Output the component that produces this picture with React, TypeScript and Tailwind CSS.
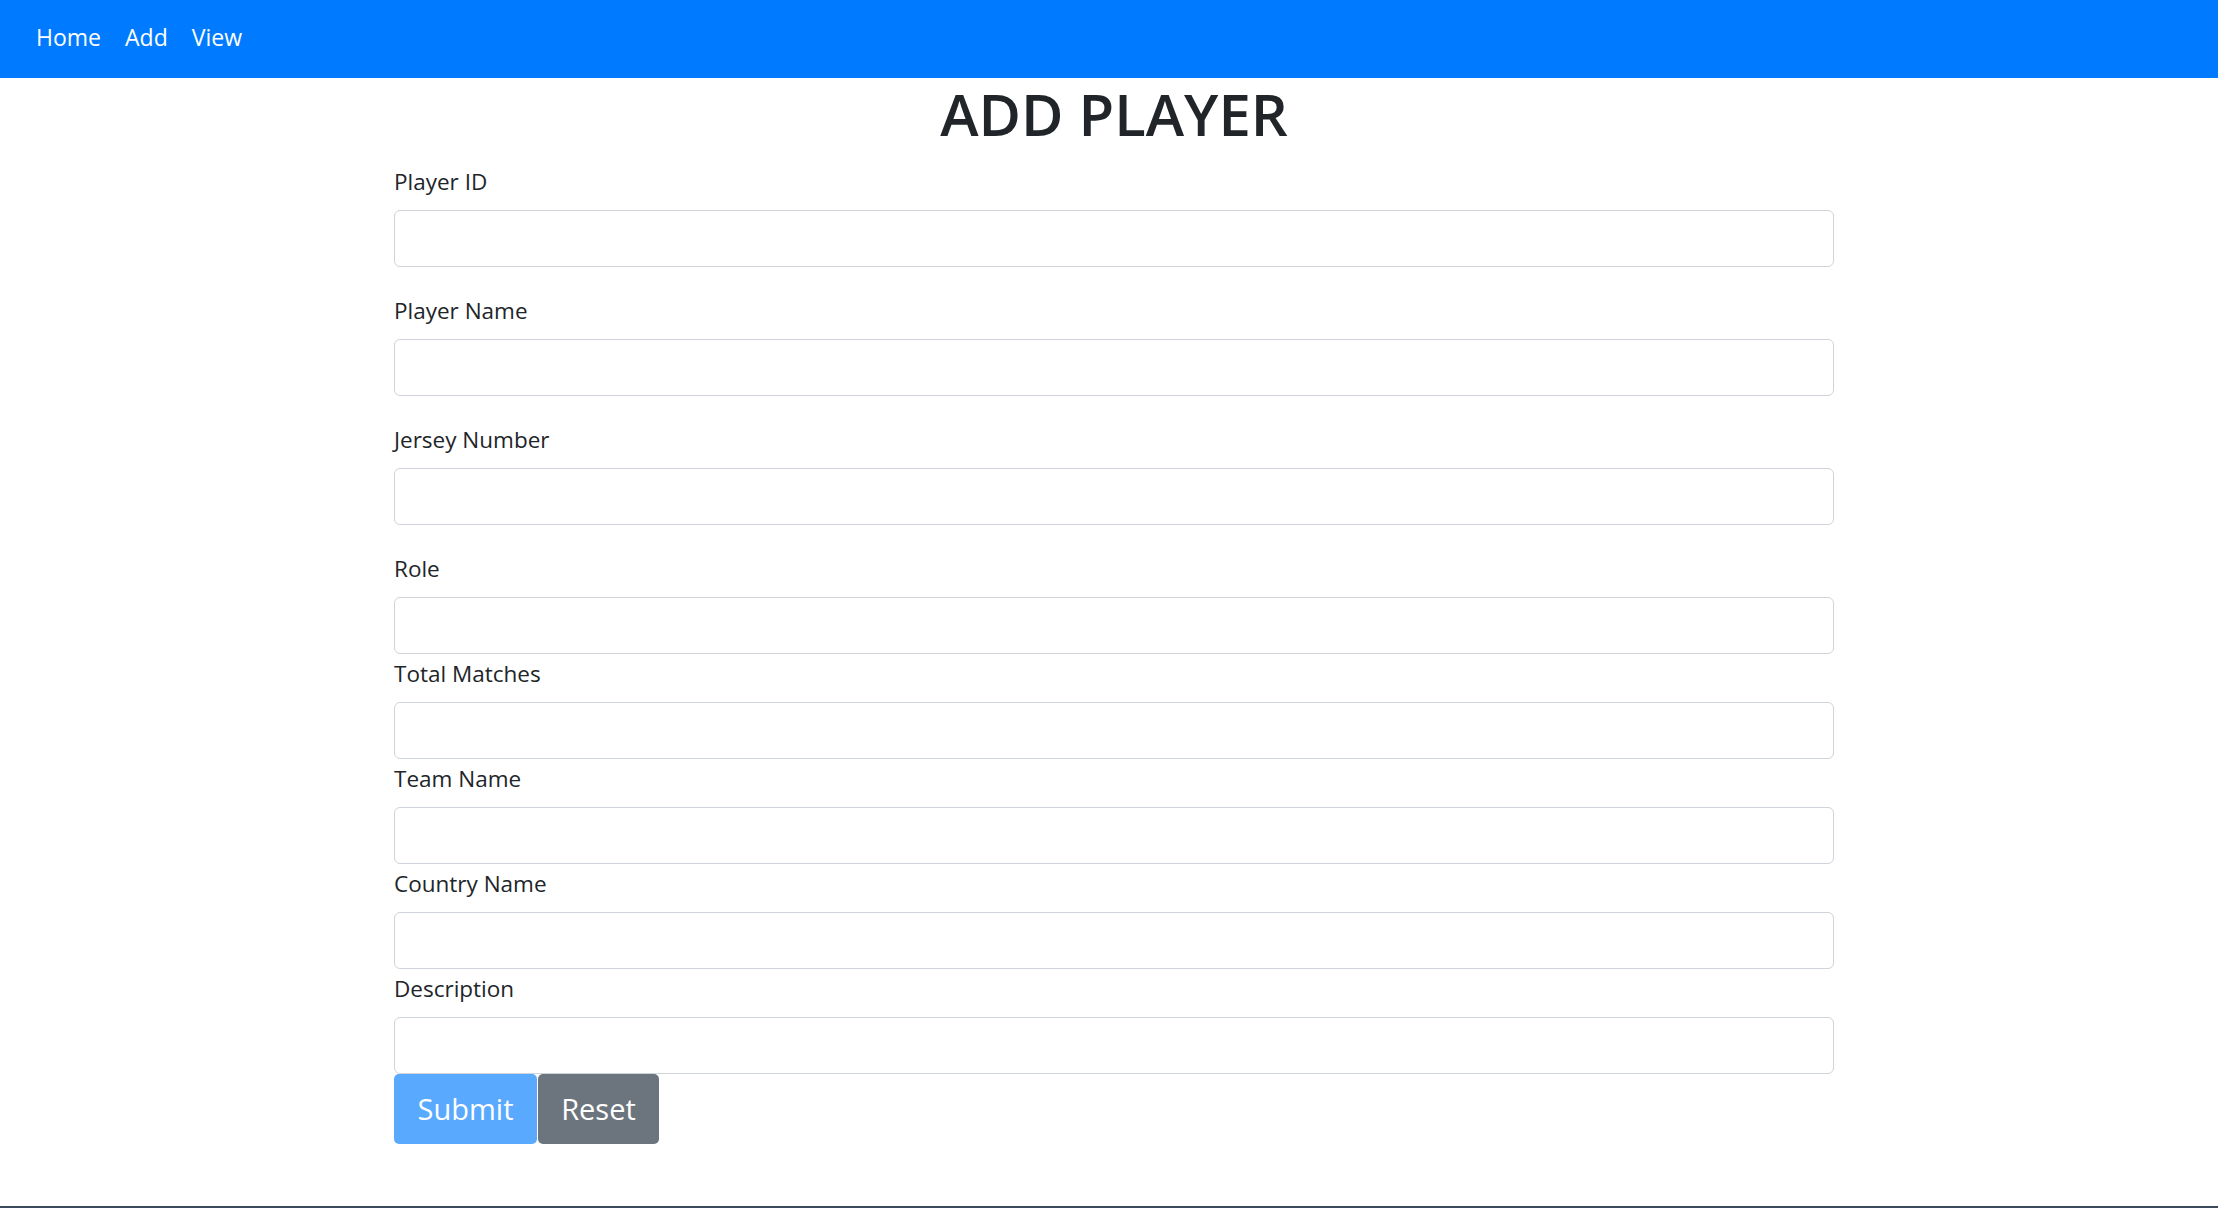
import React from 'react';

const fields: { label: string; spaced: boolean }[] = [
  { label: 'Player ID', spaced: true },
  { label: 'Player Name', spaced: true },
  { label: 'Jersey Number', spaced: true },
  { label: 'Role', spaced: false },
  { label: 'Total Matches', spaced: false },
  { label: 'Team Name', spaced: false },
  { label: 'Country Name', spaced: false },
  { label: 'Description', spaced: false },
];

const font = { fontFamily: '"Open Sans", "Noto Sans", sans-serif' };

export default function App() {
  return (
    <div className="min-h-screen flex flex-col bg-white text-[#212529]" style={font}>
      {/* --- NAVBAR --- */}
      <nav className="h-[78px] flex items-center px-[24px] pb-[4px] bg-[#007bff]">
        {['Home', 'Add', 'View'].map((l) => (
          <a key={l} href="#" className="px-[12px] text-[23px] leading-[36px] text-white">
            {l}
          </a>
        ))}
      </nav>

      {/* --- FORM --- */}
      <div className="flex-1 w-[1440px] ml-[394px]">
        <h1 className="text-[58px] leading-[72px] font-semibold text-center mb-[12px]">ADD PLAYER</h1>
        <form onSubmit={(e) => e.preventDefault()}>
          {fields.map((f) => (
            <div key={f.label} className={f.spaced ? 'mb-[24px]' : ''}>
              <label className="block text-[22.5px] leading-[39px] mb-[9px]">{f.label}</label>
              <input
                type="text"
                className="block w-full h-[57px] px-[18px] bg-white border-[1.5px] border-[#ced4da] rounded-[6px] text-[24px] outline-none"
              />
            </div>
          ))}
          <div className="flex">
            <button
              type="submit"
              className="h-[70px] w-[143px] rounded-[5px] bg-[#59a9ff] text-white text-[29px]"
            >
              Submit
            </button>
            <button
              type="reset"
              className="h-[70px] w-[121px] ml-px rounded-[5px] bg-[#6c757d] text-white text-[29px]"
            >
              Reset
            </button>
          </div>
        </form>
      </div>
      <div className="h-[2px] bg-[#3b4b5b]"></div>
    </div>
  );
}
